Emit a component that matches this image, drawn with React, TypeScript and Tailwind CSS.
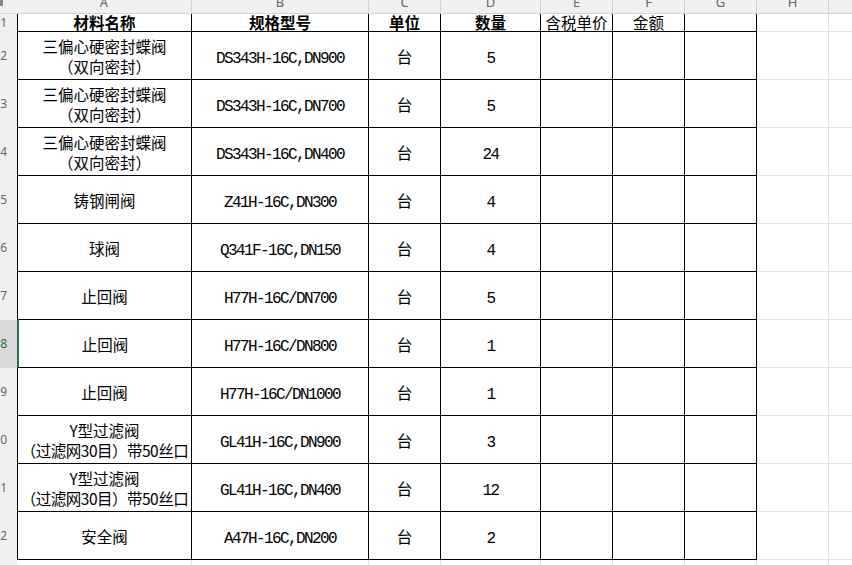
import React from 'react'

const cols = ['A', 'B', 'C', 'D', 'E', 'F', 'G', 'H', 'I']

const items = [
  { name: ['三偏心硬密封蝶阀', '（双向密封）'], spec: 'DS343H-16C,DN900', qty: '5' },
  { name: ['三偏心硬密封蝶阀', '（双向密封）'], spec: 'DS343H-16C,DN700', qty: '5' },
  { name: ['三偏心硬密封蝶阀', '（双向密封）'], spec: 'DS343H-16C,DN400', qty: '24' },
  { name: ['铸钢闸阀'], spec: 'Z41H-16C,DN300', qty: '4' },
  { name: ['球阀'], spec: 'Q341F-16C,DN150', qty: '4' },
  { name: ['止回阀'], spec: 'H77H-16C/DN700', qty: '5' },
  { name: ['止回阀'], spec: 'H77H-16C/DN800', qty: '1' },
  { name: ['止回阀'], spec: 'H77H-16C/DN1000', qty: '1' },
  { name: ['Y型过滤阀', '（过滤网30目）带50丝口'], spec: 'GL41H-16C,DN900', qty: '3' },
  { name: ['Y型过滤阀', '（过滤网30目）带50丝口'], spec: 'GL41H-16C,DN400', qty: '12' },
  { name: ['安全阀'], spec: 'A47H-16C,DN200', qty: '2' },
]

const cjk = "font-['SimSun','Noto_Sans_CJK_SC',sans-serif]"
const mono = "font-['Liberation_Mono','Noto_Sans_CJK_SC',monospace]"
const ui = "font-['Noto_Sans','Noto_Sans_CJK_SC',sans-serif]"

// black bordered cell of the table A1:G12
const cell = 'border-r border-b border-black flex items-center justify-center text-black'
const grid = 'border-r border-b border-[#e3e3e3]'
const head = `${cell} items-end text-[15.5px] leading-[17px] whitespace-nowrap ${cjk}`

function RowHead({ n, active }: { n: number; active?: boolean }) {
  return (
    <div
      className={
        'overflow-hidden flex items-center ' +
        (active ? 'bg-[#d9d9d9] text-[#217346]' : 'bg-[#f0f0f0] text-[#666]')
      }
    >
      <div className={`w-[7px] shrink-0 flex justify-end whitespace-nowrap text-[12px] ${ui}`}>{n}</div>
    </div>
  )
}

function Blank() {
  return (
    <>
      <div className={grid} />
      <div className={grid} />
    </>
  )
}

export default function App() {
  return (
    <div className="w-[852px] h-[565px] overflow-hidden bg-white">
      <div className="grid grid-cols-[17px_175px_177px_72px_100px_72px_72px_72px_72px_72px] grid-rows-[14px_18px_repeat(12,48px)] w-[900px]">
        {/* column headers */}
        <div className="bg-[#f0f0f0] border-b border-[#d4d4d4]">
          <div className="w-[3px] h-[6px] bg-[#8a8a8a]" />
        </div>
        {cols.map((c) => (
          <div
            key={c}
            className="bg-[#f0f0f0] border-r border-b border-[#d4d4d4] overflow-hidden"
          >
            <div className={`h-[20px] -mt-[7px] flex items-center justify-center text-[13px] text-[#666] ${ui}`}>
              {c}
            </div>
          </div>
        ))}

        {/* row 1 */}
        <RowHead n={1} />
        <div className={`${head} border-l font-bold`}>材料名称</div>
        <div className={`${head} font-bold`}>规格型号</div>
        <div className={`${head} font-bold`}>单位</div>
        <div className={`${head} font-bold`}>数量</div>
        <div className={head}>含税单价</div>
        <div className={head}>金额</div>
        <div className={cell} />
        <Blank />

        {items.map((it, i) => {
          const n = i + 2
          const active = n === 8
          return (
            <React.Fragment key={n}>
              <RowHead n={n} active={active} />
              <div
                className={`${cell} flex-col text-[15.5px] leading-[20px] whitespace-nowrap ${cjk} ${
                  active ? 'border-l-2 border-l-[#217346]' : 'border-l'
                }`}
              >
                {it.name.map((t) => (
                  <span key={t} className={t.length > 10 ? 'tracking-[-0.5px]' : ''}>
                    {t}
                  </span>
                ))}
              </div>
              <div className={`${cell} pt-[6px] text-[16px] tracking-[-1.6px] ${mono}`}>{it.spec}</div>
              <div className={`${cell} text-[16px] ${cjk}`}>台</div>
              <div className={`${cell} pt-[6px] text-[16px] tracking-[-1.6px] ${mono}`}>{it.qty}</div>
              <div className={cell} />
              <div className={cell} />
              <div className={cell} />
              <Blank />
            </React.Fragment>
          )
        })}

        {/* row 13 */}
        <RowHead n={13} />
        {cols.map((c) => (
          <div key={c} className={grid} />
        ))}
      </div>
    </div>
  )
}
